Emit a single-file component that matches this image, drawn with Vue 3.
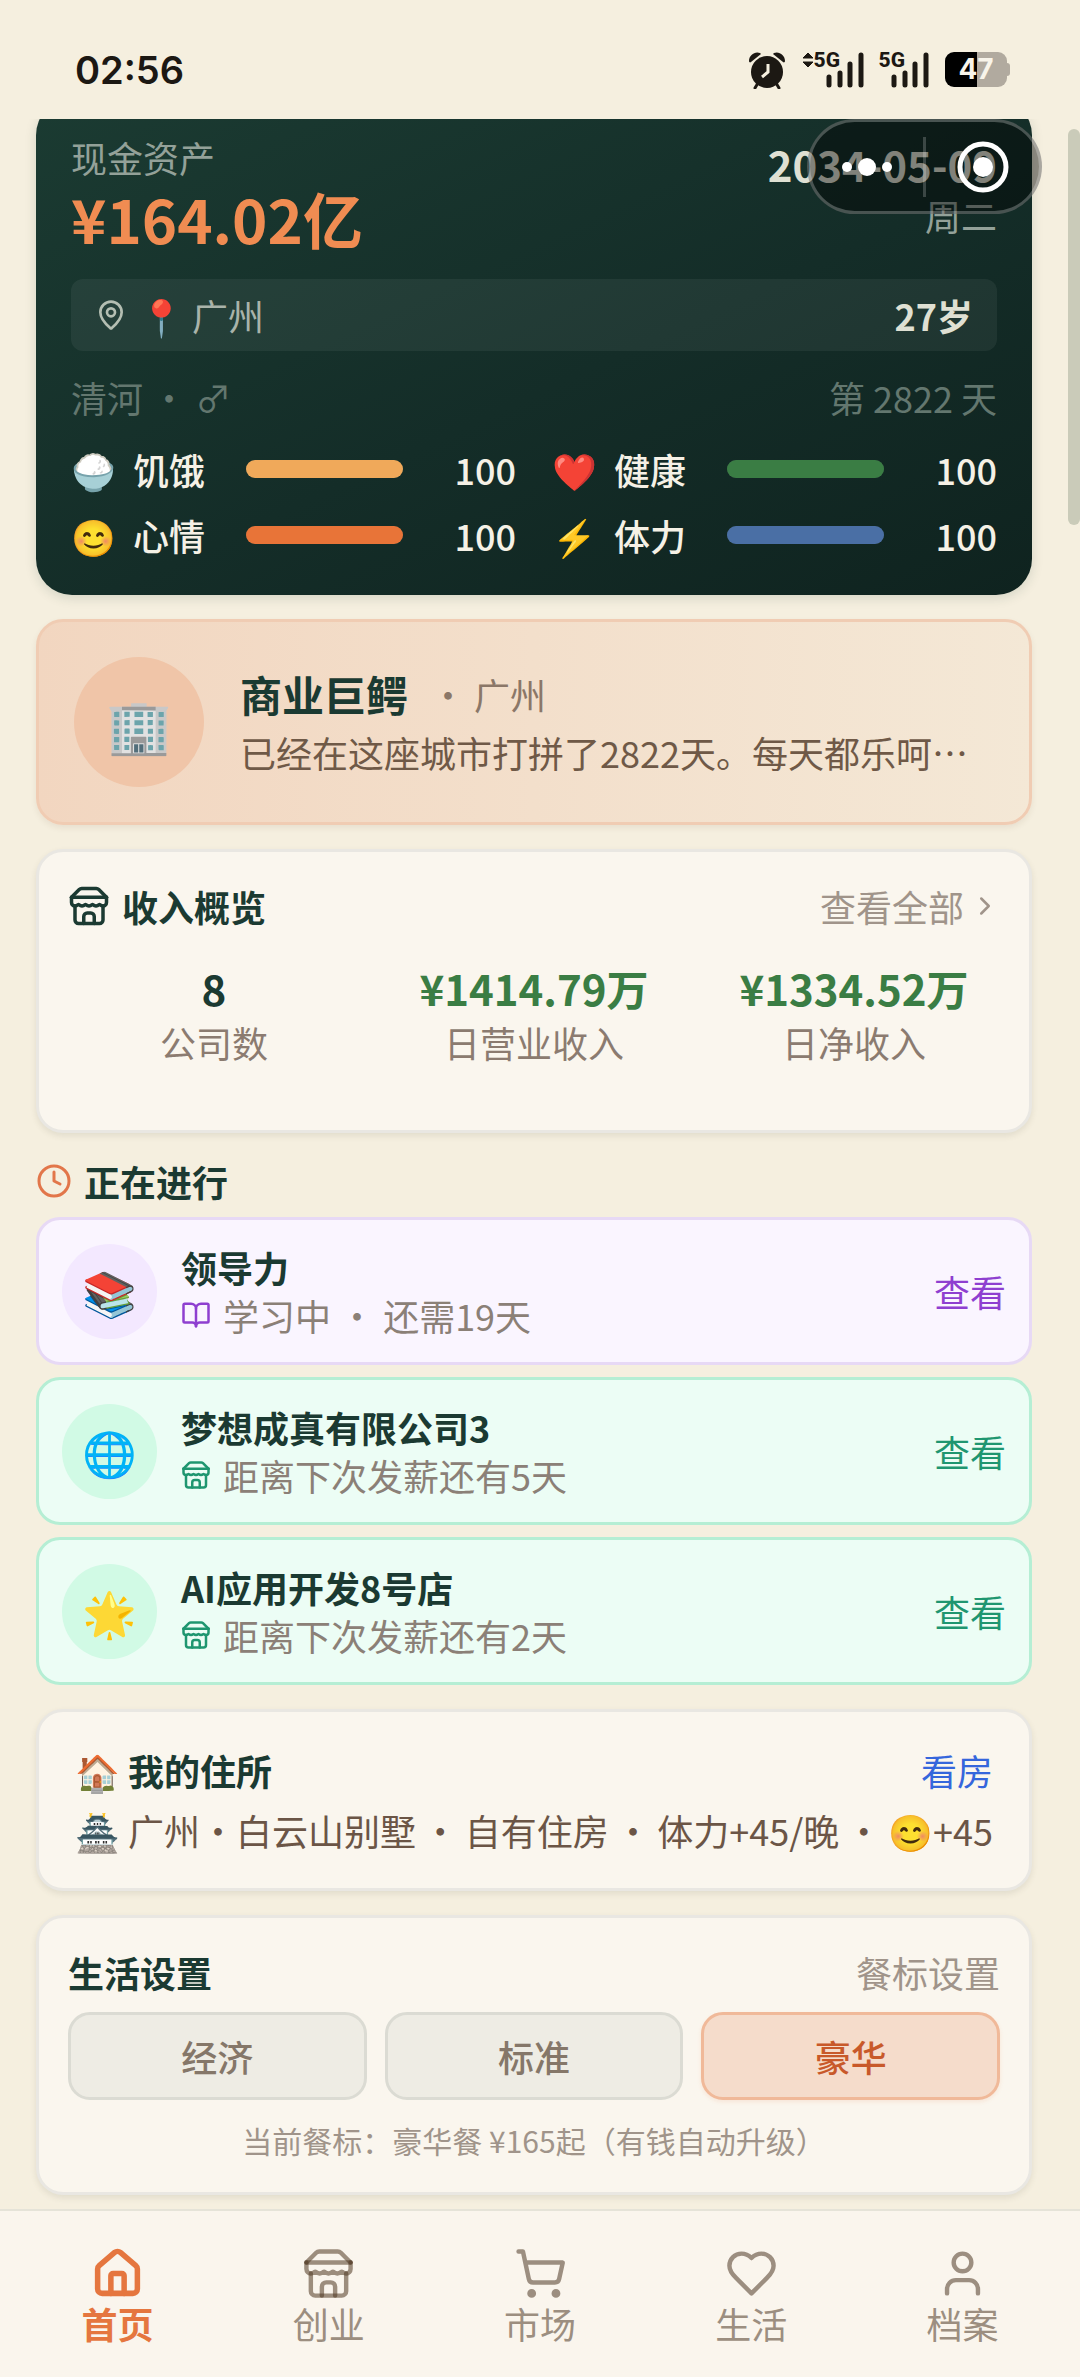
<script setup>
import { ref } from 'vue'

const stats = [
    { icon: '🍚', label: '饥饿', value: 100, tone: 'hunger' },
    { icon: '❤️', label: '健康', value: 100, tone: 'health' },
    { icon: '😊', label: '心情', value: 100, tone: 'mood' },
    { icon: '⚡', label: '体力', value: 100, tone: 'energy' }
]

const income = [
    { value: '8', label: '公司数' },
    { value: '¥1414.79万', label: '日营业收入', money: true },
    { value: '¥1334.52万', label: '日净收入', money: true }
]

const icons = {
    home: [
        'M15 21v-8a1 1 0 0 0-1-1h-4a1 1 0 0 0-1 1v8',
        'M3 10a2 2 0 0 1 .709-1.528l7-5.999a2 2 0 0 1 2.582 0l7 5.999A2 2 0 0 1 21 10v9a2 2 0 0 1-2 2H5a2 2 0 0 1-2-2z'
    ],
    store: [
        'm2 7 4.41-4.41A2 2 0 0 1 7.83 2h8.34a2 2 0 0 1 1.42.59L22 7',
        'M4 12v8a2 2 0 0 0 2 2h12a2 2 0 0 0 2-2v-8',
        'M15 22v-4a2 2 0 0 0-2-2h-2a2 2 0 0 0-2 2v4',
        'M2 7h20',
        'M22 7v3a2 2 0 0 1-2 2a2.7 2.7 0 0 1-1.59-.63.7.7 0 0 0-.82 0A2.7 2.7 0 0 1 16 12a2.7 2.7 0 0 1-1.59-.63.7.7 0 0 0-.82 0A2.7 2.7 0 0 1 12 12a2.7 2.7 0 0 1-1.59-.63.7.7 0 0 0-.82 0A2.7 2.7 0 0 1 8 12a2.7 2.7 0 0 1-1.59-.63.7.7 0 0 0-.82 0A2.7 2.7 0 0 1 4 12a2 2 0 0 1-2-2V7'
    ],
    cart: [
        'M7 21a1 1 0 1 0 2 0a1 1 0 1 0-2 0',
        'M18 21a1 1 0 1 0 2 0a1 1 0 1 0-2 0',
        'M2.05 2.05h2l2.66 12.42a2 2 0 0 0 2 1.58h9.78a2 2 0 0 0 1.95-1.57l1.65-7.43H5.12'
    ],
    heart: [
        'M19 14c1.49-1.46 3-3.21 3-5.5A5.5 5.5 0 0 0 16.5 3c-1.76 0-3 .5-4.5 2-1.5-1.5-2.74-2-4.5-2A5.5 5.5 0 0 0 2 8.5c0 2.3 1.5 4.05 3 5.5l7 7Z'
    ],
    user: [
        'M19 21v-2a4 4 0 0 0-4-4H9a4 4 0 0 0-4 4v2',
        'M8 7a4 4 0 1 0 8 0a4 4 0 1 0-8 0'
    ],
    book: [
        'M12 7v14',
        'M3 18a1 1 0 0 1-1-1V4a1 1 0 0 1 1-1h5a4 4 0 0 1 4 4 4 4 0 0 1 4-4h5a1 1 0 0 1 1 1v13a1 1 0 0 1-1 1h-6a3 3 0 0 0-3 3 3 3 0 0 0-3-3z'
    ]
}

const tasks = [
    { emoji: '📚', title: '领导力', note: '学习中 ・ 还需19天', icon: 'book', tone: 'study' },
    { emoji: '🌐', title: '梦想成真有限公司3', note: '距离下次发薪还有5天', icon: 'store', tone: 'company' },
    { emoji: '🌟', title: 'AI应用开发8号店', note: '距离下次发薪还有2天', icon: 'store', tone: 'company' }
]

const meals = ['经济', '标准', '豪华']
const meal = ref('豪华')

const tabs = [
    { icon: 'home', label: '首页' },
    { icon: 'store', label: '创业' },
    { icon: 'cart', label: '市场' },
    { icon: 'heart', label: '生活' },
    { icon: 'user', label: '档案' }
]
const tab = ref('首页')
</script>

<template>
    <div class="app">
        <header class="status">
            <span class="status__time">02:56</span>
            <div class="status__icons">
                <svg class="status__alarm" viewBox="0 0 38 38" aria-hidden="true">
                    <path d="M1 10C1 4 7 0 12 2L13 3L3 11C2 12 1 11 1 10Z" fill="#1c1813" />
                    <path d="M37 10C37 4 31 0 26 2L25 3L35 11C36 12 37 11 37 10Z" fill="#1c1813" />
                    <path d="M10 32L7 37M28 32L31 37" stroke="#1c1813" stroke-width="3" stroke-linecap="round" />
                    <circle cx="19" cy="21" r="16" fill="#1c1813" />
                    <path d="M20 13V21L14 26" fill="none" stroke="#f5efdf" stroke-width="3" />
                </svg>
                <div class="signal signal--data">
                    <svg class="signal__arrows" viewBox="0 0 12 16" aria-hidden="true">
                        <path d="M6 1L11 6H1ZM6 15L11 10H1Z" fill="#1c1813" stroke="#1c1813" stroke-linejoin="round" />
                    </svg>
                    <span class="signal__type">5G</span>
                    <svg class="signal__bars" viewBox="0 0 38 36" aria-hidden="true">
                        <path d="M3 25V33M14 21V33M24 12V33M35 3V33" stroke="#1c1813" stroke-width="5" stroke-linecap="round" />
                    </svg>
                </div>
                <div class="signal">
                    <span class="signal__type">5G</span>
                    <svg class="signal__bars" viewBox="0 0 38 36" aria-hidden="true">
                        <path d="M3 25V33M14 21V33M24 12V33M35 3V33" stroke="#1c1813" stroke-width="5" stroke-linecap="round" />
                    </svg>
                </div>
                <div class="battery"><span class="battery__level">47</span></div>
            </div>
        </header>

        <main class="page">
            <section class="hero">
                <div class="hero__top">
                    <div>
                        <div class="hero__label">现金资产</div>
                        <div class="hero__cash">¥164.02亿</div>
                    </div>
                    <div class="hero__when">
                        <div class="hero__date">2034-05-09</div>
                        <div class="hero__label">周二</div>
                    </div>
                </div>
                <div class="hero__place">
                    <svg class="hero__pin" viewBox="0 0 24 24" aria-hidden="true">
                        <path d="M20 10c0 4.993-5.539 10.193-7.399 11.799a1 1 0 0 1-1.202 0C9.539 20.193 4 14.993 4 10a8 8 0 0 1 16 0" />
                        <circle cx="12" cy="10" r="3" />
                    </svg>
                    <span class="hero__city">📍 广州</span>
                    <span class="hero__age">27岁</span>
                </div>
                <div class="hero__who">
                    <span>清河 ・ ♂</span>
                    <span>第 2822 天</span>
                </div>
                <div class="stats">
                    <div v-for="stat in stats" :key="stat.label" class="stat">
                        <span class="stat__icon">{{ stat.icon }}</span>
                        <span class="stat__label">{{ stat.label }}</span>
                        <div class="stat__track">
                            <div class="stat__bar" :class="stat.tone" :style="{ width: stat.value + '%' }"></div>
                        </div>
                        <span class="stat__value">{{ stat.value }}</span>
                    </div>
                </div>
            </section>

            <section class="career">
                <div class="career__badge">🏢</div>
                <div class="career__text">
                    <div class="career__head">
                        <h2 class="career__title">商业巨鳄</h2>
                        <span class="career__city">・ 广州</span>
                    </div>
                    <p class="career__story">已经在这座城市打拼了2822天。每天都乐呵呵的，日子越过越红火。</p>
                </div>
            </section>

            <section class="card income">
                <div class="row">
                    <h2 class="title title--icon">
                        <svg class="icon icon--title" viewBox="0 0 24 24" aria-hidden="true">
                            <path v-for="d in icons.store" :key="d" :d="d" />
                        </svg>
                        收入概览
                    </h2>
                    <a class="more" href="#">
                        查看全部
                        <svg class="icon icon--more" viewBox="0 0 24 24" aria-hidden="true">
                            <path d="m9 18 6-6-6-6" />
                        </svg>
                    </a>
                </div>
                <div class="income__grid">
                    <div v-for="item in income" :key="item.label" class="income__item">
                        <div class="income__value" :class="{ 'income__value--money': item.money }">{{ item.value }}</div>
                        <div class="income__label">{{ item.label }}</div>
                    </div>
                </div>
            </section>

            <section class="ongoing">
                <h2 class="title title--icon">
                    <svg class="icon icon--clock" viewBox="0 0 24 24" aria-hidden="true">
                        <circle cx="12" cy="12" r="10" />
                        <path d="M12 6v6l4 2" />
                    </svg>
                    正在进行
                </h2>
                <div class="tasks">
                    <div v-for="task in tasks" :key="task.title" class="task" :class="'task--' + task.tone">
                        <div class="task__badge">{{ task.emoji }}</div>
                        <div class="task__text">
                            <div class="task__title">{{ task.title }}</div>
                            <div class="task__note">
                                <svg class="icon icon--note" viewBox="0 0 24 24" aria-hidden="true">
                                    <path v-for="d in icons[task.icon]" :key="d" :d="d" />
                                </svg>
                                {{ task.note }}
                            </div>
                        </div>
                        <a class="task__link" href="#">查看</a>
                    </div>
                </div>
            </section>

            <section class="card house">
                <div class="row">
                    <h2 class="title title--emoji"><span>🏠</span>我的住所</h2>
                    <a class="house__link" href="#">看房</a>
                </div>
                <div class="house__line">
                    <span class="house__name"><span>🏯</span>广州・白云山别墅</span>
                    <span>・</span>
                    <span>自有住房</span>
                    <span>・</span>
                    <span>体力+45/晚</span>
                    <span>・</span>
                    <span>😊+45</span>
                </div>
            </section>

            <section class="card life">
                <div class="row">
                    <h2 class="title">生活设置</h2>
                    <span class="life__side">餐标设置</span>
                </div>
                <div class="meals">
                    <button
                        v-for="name in meals"
                        :key="name"
                        type="button"
                        class="meal"
                        :class="{ 'meal--active': meal === name }"
                        @click="meal = name"
                    >
                        {{ name }}
                    </button>
                </div>
                <p class="life__hint">当前餐标：豪华餐 ¥165起（有钱自动升级）</p>
            </section>
        </main>

        <nav class="tabbar">
            <a
                v-for="item in tabs"
                :key="item.label"
                href="#"
                class="tab"
                :class="{ 'tab--active': tab === item.label }"
                @click.prevent="tab = item.label"
            >
                <svg class="icon icon--tab" :class="'icon--' + item.icon" viewBox="0 0 24 24" aria-hidden="true">
                    <path v-for="d in icons[item.icon]" :key="d" :d="d" />
                </svg>
                <span>{{ item.label }}</span>
            </a>
        </nav>

        <div class="capsule">
            <button class="capsule__btn" type="button" aria-label="更多">
                <svg class="capsule__dots" viewBox="0 0 50 18" aria-hidden="true">
                    <circle cx="5" cy="9" r="5" />
                    <circle cx="25" cy="9" r="9" />
                    <circle cx="45" cy="9" r="5" />
                </svg>
            </button>
            <span class="capsule__line"></span>
            <button class="capsule__btn" type="button" aria-label="关闭">
                <svg class="capsule__ring" viewBox="0 0 52 52" aria-hidden="true">
                    <circle cx="26" cy="26" r="23" fill="none" stroke="#fff" stroke-width="5" />
                    <circle cx="26" cy="26" r="10" />
                </svg>
            </button>
        </div>
        <div class="scrollbar"></div>
    </div>
</template>

<style>
body {
    background: #f5efdf;
}
</style>

<style scoped>
.app {
    position: relative;
    display: flex;
    flex-direction: column;
    min-height: 100vh;
    background: #f5efdf;
    color: #1b3a32;
    font-family: "Noto Sans CJK SC", "Noto Sans", sans-serif;
    font-size: 36px;
    line-height: 48px;
}

h2,
p {
    margin: 0;
}

h2 {
    font-size: inherit;
}

a {
    text-decoration: none;
}

.icon {
    flex: none;
    fill: none;
    stroke: currentColor;
    stroke-width: 2;
    stroke-linecap: round;
    stroke-linejoin: round;
}

/* status bar */
.status {
    display: flex;
    align-items: center;
    justify-content: space-between;
    height: 119px;
    box-sizing: border-box;
    padding: 20px 70px 0 75px;
    color: #1c1813;
}

.status__time {
    font-family: Inter, sans-serif;
    font-size: 38px;
    font-weight: 600;
}

.status__icons {
    display: flex;
    align-items: center;
    gap: 16px;
}

.status__alarm {
    width: 38px;
    height: 38px;
}

.signal {
    position: relative;
    display: flex;
    align-items: flex-start;
    justify-content: flex-end;
    width: 49px;
    height: 36px;
}

.signal--data {
    width: 62px;
}

.signal__arrows {
    width: 12px;
    height: 16px;
    margin-right: auto;
}

.signal__type {
    position: absolute;
    right: 24px;
    top: -1px;
    font-family: Roboto, sans-serif;
    font-size: 21px;
    font-weight: 800;
    line-height: 18px;
}

.signal__bars {
    width: 38px;
    height: 36px;
}

.battery {
    position: relative;
    display: flex;
    align-items: center;
    justify-content: center;
    width: 62px;
    height: 35px;
    margin-right: 3px;
    border-radius: 9px;
    background: linear-gradient(90deg, #000 51%, #b1aa9f 51%);
}

.battery::after {
    content: '';
    position: absolute;
    left: 100%;
    top: 11px;
    width: 3px;
    height: 13px;
    border-radius: 0 3px 3px 0;
    background: #b1aa9f;
}

.battery__level {
    color: #f8f4ea;
    font-family: Inter, sans-serif;
    font-size: 28px;
    font-weight: 700;
    line-height: 35px;
}

/* page */
.page {
    flex: 1;
    display: flex;
    flex-direction: column;
    gap: 24px;
    padding: 0 48px 12px 36px;
    overflow: hidden;
}

.hero {
    margin-top: -20px;
    padding: 34px 35px 36px;
    border-radius: 36px;
    background: linear-gradient(155deg, #1b3b32 0%, #142d28 55%, #0f231f 100%);
    box-shadow: 0 3px 12px rgba(27, 58, 50, 0.15);
}

.hero__top {
    display: flex;
    justify-content: space-between;
}

.hero__label {
    color: #93a199;
}

.hero__cash {
    color: #f08c52;
    font-size: 60px;
    font-weight: 700;
    line-height: 74px;
}

.hero__when {
    padding-top: 4px;
    text-align: right;
}

.hero__date {
    color: #dfe0d3;
    font-size: 42px;
    font-weight: 700;
    line-height: 54px;
}

.hero__place {
    display: flex;
    align-items: center;
    margin-top: 24px;
    padding: 12px 24px;
    border-radius: 12px;
    background: rgba(255, 255, 255, 0.06);
    color: #a9b3aa;
}

.hero__pin {
    width: 32px;
    height: 32px;
    margin-right: 12px;
    fill: none;
    stroke: #b4beb2;
    stroke-width: 2;
}

.hero__age {
    margin-left: auto;
    color: #dfe0d3;
    font-weight: 700;
}

.hero__who {
    display: flex;
    justify-content: space-between;
    margin-top: 22px;
    color: #63776f;
}

.stats {
    display: grid;
    grid-template-columns: 1fr 1fr;
    gap: 18px 36px;
    margin-top: 24px;
    color: #f5f1e6;
    font-weight: 500;
}

.stat {
    display: flex;
    align-items: center;
    gap: 18px;
}

.stat__icon {
    width: 44px;
}

.stat__label {
    width: 95px;
}

.stat__track {
    flex: 1;
    border-radius: 9px;
    background: rgba(255, 255, 255, 0.12);
}

.stat__bar {
    height: 18px;
    border-radius: 9px;
}

.stat__value {
    width: 95px;
    text-align: right;
}

.hunger {
    background: #f0a95a;
}

.health {
    background: #3a7d44;
}

.mood {
    background: #e87438;
}

.energy {
    background: #4a6fa5;
}

.career {
    display: flex;
    align-items: center;
    gap: 36px;
    padding: 35px;
    border: 3px solid #f0ccb3;
    border-radius: 27px;
    background: linear-gradient(90deg, #f2d6c0, #f4e8d6) border-box;
    box-shadow: 0 3px 6px rgba(80, 50, 20, 0.08);
}

.career__badge {
    display: flex;
    flex: none;
    align-items: center;
    justify-content: center;
    width: 130px;
    height: 130px;
    border-radius: 50%;
    background: #f0c5a8;
    font-size: 53px;
}

.career__text {
    flex: 1;
    min-width: 0;
    padding-right: 18px;
}

.career__head {
    display: flex;
    align-items: center;
    gap: 22px;
}

.career__title {
    font-size: 42px;
    line-height: 60px;
}

.career__city {
    color: #8b7768;
}

.career__story {
    overflow: hidden;
    line-height: 56px;
    color: #6f5947;
    text-overflow: ellipsis;
    white-space: nowrap;
}

.card {
    padding: 30px 29px;
    border: 3px solid #e9e7e2;
    border-radius: 27px;
    background: #faf6ee;
    box-shadow: 0 3px 6px rgba(60, 60, 40, 0.1);
}

.row {
    display: flex;
    align-items: center;
    justify-content: space-between;
}

.title {
    font-weight: 700;
}

.title--icon {
    display: flex;
    align-items: center;
    gap: 12px;
}

.title--emoji {
    display: flex;
    gap: 8px;
}

.icon--title {
    width: 42px;
    height: 42px;
}

.more {
    display: flex;
    align-items: center;
    gap: 6px;
    color: #a0948a;
}

.icon--more {
    width: 30px;
    height: 30px;
}

.income {
    padding-bottom: 62px;
}

.income__grid {
    display: grid;
    grid-template-columns: repeat(3, 1fr);
    gap: 28px;
    margin-top: 30px;
    text-align: center;
}

.income__value {
    font-size: 42px;
    font-weight: 700;
    line-height: 56px;
}

.income__value--money {
    color: #3a7d44;
}

.income__label {
    line-height: 52px;
    color: #8b7b70;
}

.ongoing .title {
    margin-bottom: 12px;
}

.icon--clock {
    width: 36px;
    height: 36px;
    color: #e2764a;
}

.tasks {
    display: flex;
    flex-direction: column;
    gap: 12px;
}

.task {
    display: flex;
    align-items: center;
    gap: 24px;
    padding: 23px;
    border: 3px solid;
    border-radius: 24px;
}

.task__badge {
    display: flex;
    align-items: center;
    justify-content: center;
    width: 95px;
    height: 95px;
    border-radius: 50%;
    font-size: 44px;
}

.task__title {
    font-weight: 700;
}

.task__note {
    display: flex;
    align-items: center;
    gap: 12px;
    color: #8b8077;
}

.icon--note {
    width: 30px;
    height: 30px;
}

.task__link {
    margin-left: auto;
}

.task--study {
    border-color: #e7d9f5;
    background: #faf5ff;
}

.task--study .task__badge {
    background: #f3e8ff;
}

.task--study .task__link,
.task--study .icon {
    color: #8e3fd0;
}

.task--company {
    border-color: #b5eed4;
    background: #ecfdf5;
}

.task--company .task__badge {
    background: #d1fae5;
}

.task--company .task__link,
.task--company .icon {
    color: #1f9670;
}

.house {
    padding: 34px 36px;
}

.house__link {
    color: #3566dc;
}

.house__line {
    display: flex;
    justify-content: space-between;
    margin-top: 12px;
    color: #6b5546;
    white-space: nowrap;
}

.house__name {
    display: flex;
    gap: 8px;
}

.life__side {
    color: #a0948a;
}

.meals {
    display: grid;
    grid-template-columns: repeat(3, 1fr);
    gap: 18px;
    margin-top: 16px;
}

.meal {
    padding: 17px 0;
    border: 3px solid #dbdbd3;
    border-radius: 22px;
    background: #eeece4;
    color: #857769;
    font: inherit;
    font-weight: 500;
    cursor: pointer;
}

.meal--active {
    border-color: #f0b999;
    background: #f5dccb;
    box-shadow: 0 2px 4px rgba(232, 116, 56, 0.12);
    color: #c8592a;
}

.life__hint {
    margin-top: 18px;
    font-size: 30px;
    line-height: 44px;
    text-align: center;
    color: #a0948a;
}

/* bottom navigation */
.tabbar {
    position: sticky;
    bottom: 0;
    display: flex;
    padding: 36px 12px 31px;
    border-top: 2px solid #e5e3d8;
    background: #faf5ed;
}

.tab {
    flex: 1;
    display: flex;
    flex-direction: column;
    align-items: center;
    line-height: 46px;
    color: #9c8e80;
}

.tab--active {
    color: #e5763f;
    font-weight: 700;
}

.icon--tab {
    width: 53px;
    height: 53px;
}

.tab--active .icon--tab {
    stroke-width: 2.5;
}

.icon--store.icon--tab {
    stroke: rgba(82, 58, 38, 0.56);
}

/* mini program capsule, floats over the page */
.capsule {
    position: absolute;
    top: 119px;
    right: 38px;
    display: flex;
    align-items: center;
    box-sizing: border-box;
    width: 235px;
    height: 95px;
    border: 3px solid rgba(255, 255, 255, 0.25);
    border-radius: 48px;
    background: rgba(0, 0, 0, 0.42);
}

.capsule__btn {
    flex: 1;
    display: flex;
    justify-content: center;
    padding: 0;
    border: 0;
    background: none;
}

.capsule__btn svg {
    fill: #fff;
}

.capsule__dots {
    width: 50px;
    height: 18px;
}

.capsule__ring {
    width: 52px;
    height: 52px;
}

.capsule__line {
    width: 3px;
    height: 60px;
    background: rgba(255, 255, 255, 0.2);
}

.scrollbar {
    position: absolute;
    top: 129px;
    right: 0;
    width: 12px;
    height: 396px;
    border-radius: 6px;
    background: #cacbb9;
}
</style>
